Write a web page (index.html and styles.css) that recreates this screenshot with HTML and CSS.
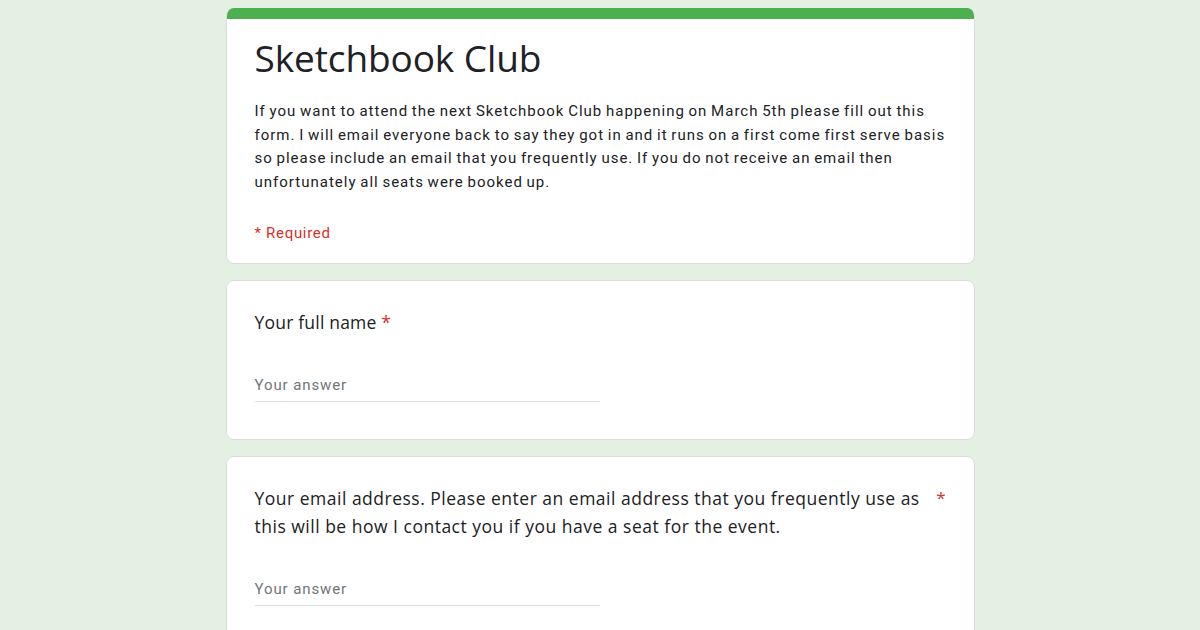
FILE: index.html
```html
<!DOCTYPE html>
<html lang="en">
<head>
<meta charset="utf-8">
<title>Sketchbook Club</title>
<link rel="stylesheet" href="styles.css">
</head>
<body>
<main class="form">
  <section class="card header-card">
    <div class="accent"></div>
    <div class="header-body">
      <h1 class="title">Sketchbook Club</h1>
      <p class="desc">If you want to attend the next Sketchbook Club happening on March 5th please fill out this form. I will email everyone back to say they got in and it runs on a first come first serve basis so please include an email that you frequently use. If you do not receive an email then unfortunately all seats were booked up.</p>
      <div class="required-note">* Required</div>
    </div>
  </section>

  <section class="card question">
    <div class="q-head">
      <span class="q-text">Your full name <span class="star">*</span></span>
    </div>
    <div class="answer">Your answer</div>
  </section>

  <section class="card question">
    <div class="q-head">
      <span class="q-text wide">Your email address. Please enter an email address that you frequently use as this will be how I contact you if you have a seat for the event.</span>
      <span class="star side">*</span>
    </div>
    <div class="answer">Your answer</div>
  </section>
</main>
</body>
</html>
```
FILE: styles.css
```css
html, body {
  margin: 0;
  padding: 0;
  background: #e3f0e2;
}
body {
  font-family: Roboto, "Noto Sans", sans-serif;
  color: #202124;
}
.form {
  width: 749px;
  margin: 0 auto;
  padding-top: 8px;
  display: flex;
  flex-direction: column;
  gap: 16px;
}
.card {
  background: #fff;
  border: 1px solid #dadce0;
  border-radius: 8px;
  box-sizing: border-box;
}
.header-card {
  overflow: hidden;
  border-top: none;
  height: 256px;
}
.accent {
  height: 11px;
  background: #4caf50;
}
.header-body {
  padding: 15px 28px 0 28px;
}
.title {
  margin: 0;
  font-family: "Open Sans", sans-serif;
  font-weight: 400;
  font-size: 37px;
  line-height: 48px;
  letter-spacing: -0.1px;
  color: #202124;
}
.desc {
  margin: 18px 0 0;
  font-size: 15px;
  line-height: 23.5px;
  letter-spacing: 1px;
  word-spacing: -1px;
  color: #202124;
}
.required-note {
  margin-top: 30px;
  font-size: 15px;
  letter-spacing: 0.7px;
  color: #d93025;
}
.question {
  padding: 27px 28px 38px;
  height: 160px;
}
.question:last-child {
  height: 200px;
}
.q-head {
  display: flex;
  justify-content: space-between;
  gap: 14px;
}
.q-text {
  font-family: "Open Sans", sans-serif;
  font-size: 17.5px;
  line-height: 28px;
  letter-spacing: 0.2px;
  color: #202124;
}
.q-text.wide {
  max-width: 675px;
  letter-spacing: 0.5px;
}
.star {
  color: #d93025;
}
.star.side {
  font-family: "Open Sans", sans-serif;
  font-size: 17px;
  line-height: 28px;
}
.answer {
  margin-top: 38px;
  width: 345px;
  font-size: 15px;
  line-height: 22px;
  letter-spacing: 0.9px;
  color: #70757a;
  border-bottom: 1px solid #dadce0;
  padding-bottom: 5px;
}
```
